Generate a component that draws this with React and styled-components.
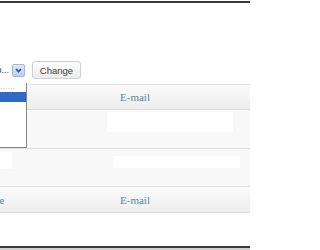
import styled, { createGlobalStyle } from "styled-components";

const Global = createGlobalStyle`
  html, body { margin: 0; padding: 0; background: #fff; }
  body { font-family: "Liberation Sans", Arial, sans-serif; }
`;

const Page = styled.div`
  position: relative;
  width: 250px;
  height: 250px;
  overflow: hidden;
  background: #fff;
  display: flex;
  flex-direction: column;
`;

const Rule = styled.div`
  height: 2px;
  margin-top: ${({ $top }) => $top || 0}px;
  background: #3a3a3a;
  flex-shrink: 0;
`;

const Toolbar = styled.div`
  display: flex;
  align-items: center;
  gap: 6px;
  margin-top: 58px;
  margin-left: -40px;
  height: 18px;
`;

const SelectWrap = styled.div`
  position: relative;
  width: 66px;
  height: 14px;
`;

const SelectBox = styled.div`
  display: flex;
  align-items: center;
  justify-content: space-between;
  height: 14px;
  font-size: 9px;
  color: #333;
  padding-right: 1px;
`;

const Arrow = styled.span`
  width: 11px;
  height: 11px;
  background: linear-gradient(#dfe8f8, #b9cdee);
  border: 1px solid #9fb6e0;
  border-radius: 2px;
  display: flex;
  align-items: center;
  justify-content: center;
`;

const List = styled.ul`
  position: absolute;
  left: 0;
  top: 20px;
  width: 67px;
  height: 65px;
  margin: 0;
  padding: 2px 0 0;
  list-style: none;
  background: #fff;
  border-right: 1px solid #858585;
  border-bottom: 1px solid #858585;
  box-sizing: border-box;
  z-index: 2;
`;

const Item = styled.li`
  height: ${({ $active }) => ($active ? 10 : 7)}px;
  background: ${({ $active }) => ($active ? "#3169c6" : "transparent")};
  color: #a8a8a8;
  font-size: 8px;
  line-height: 4px;
  letter-spacing: 0.3px;
  padding-left: 40px;
  white-space: nowrap;
`;

const Button = styled.button`
  width: 49px;
  height: 18px;
  padding: 0;
  border: 1px solid #cfcfcf;
  border-radius: 3px;
  background: linear-gradient(#fdfdfd, #ececec);
  color: #3c3c3c;
  font-family: "Liberation Sans", Arial, sans-serif;
  font-size: 9.5px;
`;

const Table = styled.div`
  margin-top: 5px;
  display: flex;
  flex-direction: column;
  flex: 1;
`;

const Head = styled.div`
  display: grid;
  grid-template-columns: 120px 1fr;
  align-items: center;
  height: ${({ $h }) => $h}px;
  box-sizing: border-box;
  border-top: 1px solid #e2e2e2;
  border-bottom: 1px solid #dcdcdc;
  background: linear-gradient(#fbfbfb, #ededed);
  font-family: "Liberation Serif", "Times New Roman", serif;
  font-size: 11px;
  color: #5a8894;
`;

const HeadCell = styled.span`
  margin-left: ${({ $shift }) => $shift || 0}px;
  white-space: nowrap;
`;

const Row = styled.div`
  display: grid;
  grid-template-columns: ${({ $cols }) => $cols};
  align-items: start;
  height: ${({ $h }) => $h}px;
  box-sizing: border-box;
  background: #f8f8f8;
  border-bottom: ${({ $line }) => ($line ? "1px solid #dedede" : "none")};
`;

const Field = styled.div`
  margin-top: ${({ $top }) => $top}px;
  height: ${({ $h }) => $h}px;
  width: ${({ $w }) => $w}px;
  background: #fff;
`;

const Blank = styled.div`
  flex: 1;
`;

const Foot = styled.div`
  height: 2px;
  background: #cfcfcf;
`;

export default function App() {
  return (
    <Page>
      <Global />
      <Rule $top={1} />
      <Toolbar>
        <SelectWrap>
          <SelectBox>
            <span>Select two...</span>
            <Arrow>
              <svg width="7" height="5" viewBox="0 0 7 5">
                <path d="M1 1 L3.5 3.5 L6 1" fill="none" stroke="#2d4f93" strokeWidth="1.6" />
              </svg>
            </Arrow>
          </SelectBox>
          <List>
            <Item>......</Item>
            <Item $active />
          </List>
        </SelectWrap>
        <Button>Change</Button>
      </Toolbar>
      <Table>
        <Head $h={26}>
          <HeadCell $shift={-22}>Name</HeadCell>
          <HeadCell>E-mail</HeadCell>
        </Head>
        <Row $h={39} $line $cols="107px 1fr">
          <span />
          <Field $top={2} $h={20} $w={126} />
        </Row>
        <Row $h={37} $cols="113px 1fr">
          <Field $top={3} $h={17} $w={12} />
          <Field $top={7} $h={12} $w={127} />
        </Row>
        <Head $h={27}>
          <HeadCell $shift={-22}>Name</HeadCell>
          <HeadCell>E-mail</HeadCell>
        </Head>
        <Blank />
      </Table>
      <Rule />
      <Foot />
    </Page>
  );
}
